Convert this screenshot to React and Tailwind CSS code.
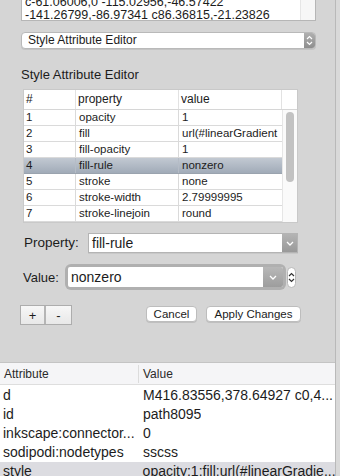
import React from 'react';

const rows = [
  ['1', 'opacity', '1'],
  ['2', 'fill', 'url(#linearGradient'],
  ['3', 'fill-opacity', '1'],
  ['4', 'fill-rule', 'nonzero'],
  ['5', 'stroke', 'none'],
  ['6', 'stroke-width', '2.79999995'],
  ['7', 'stroke-linejoin', 'round'],
];

const attrs = [
  ['d', 'M416.83556,378.64927 c0,4...'],
  ['id', 'path8095'],
  ['inkscape:connector...', '0'],
  ['sodipodi:nodetypes', 'sscss'],
  ['style', 'opacity:1;fill:url(#linearGradie...'],
];

const ChevronDown = ({ className = '' }) => (
  <svg width="8" height="5" viewBox="0 0 8 5" className={className}>
    <polyline points="1,1 4,4 7,1" fill="none" stroke="currentColor" strokeWidth="1.3" />
  </svg>
);

const UpDown = ({ className = '' }) => (
  <svg width="7" height="11" viewBox="0 0 7 11" className={className}>
    <polyline points="1,4 3.5,1.5 6,4" fill="none" stroke="currentColor" strokeWidth="1.2" />
    <polyline points="1,7 3.5,9.5 6,7" fill="none" stroke="currentColor" strokeWidth="1.2" />
  </svg>
);

export default function App() {
  return (
    <div className="w-[340px] h-[476px] overflow-hidden flex bg-[#d5d5d5] font-['Liberation_Sans',Arial,sans-serif] text-[#1c1c1c]">
      <div className="w-[335px] h-[476px]">
        {/* path text area */}
        <div className="ml-[21px] w-[295px] h-[21px] flex bg-white border-x border-b border-[#b6b6b6] overflow-hidden">
          <div className="flex-1 pl-[3px] text-[12.5px] leading-[13px] -mt-[4px] whitespace-nowrap overflow-hidden">
            <div>c-61.06006,0 -115.02956,-46.57422</div>
            <div>-141.26799,-86.97341 c86.36815,-21.23826</div>
          </div>
          <div className="w-[15px] bg-[#f7f7f7] border-l border-[#e6e6e6]" />
        </div>

        {/* panel selector */}
        <div className="mt-[11px] ml-[21px] w-[295px] h-[17px] flex rounded-[4px] border border-[#b9b9b9] bg-white overflow-hidden shadow-[0_1px_0_rgba(0,0,0,0.08)]">
          <div className="flex-1 pl-[6px] text-[12px] leading-[15px]">Style Attribute Editor</div>
          <div className="w-[11px] flex items-center justify-center bg-gradient-to-b from-[#b0b0b0] to-[#8e8e8e] text-white">
            <UpDown />
          </div>
        </div>

        <div className="mt-[18px] ml-[21px] text-[13px] leading-[16px]">Style Attribute Editor</div>

        {/* style table */}
        <div className="mt-[6px] ml-[23px] w-[275px] border border-[#c9c9c9] bg-white">
          <div className="grid grid-cols-[52px_103px_103px_15px] h-[20px] border-b border-[#d6d6d6] text-[12px] leading-[19px]">
            <div className="pl-[2px] border-r border-[#e2e2e2]">#</div>
            <div className="pl-[2px] border-r border-[#e2e2e2]">property</div>
            <div className="pl-[2px] border-r border-[#e2e2e2]">value</div>
            <div />
          </div>
          <div className="flex">
            <div className="w-[258px]">
              {rows.map(([n, p, v]) => {
                const sel = n === '4';
                return (
                  <div
                    key={n}
                    className={`grid grid-cols-[52px_103px_103px] h-[16px] border-b text-[11.5px] leading-[15px] ${
                      sel
                        ? 'bg-gradient-to-b from-[#c2c9d2] to-[#a1abb8] border-[#9aa3ae]'
                        : 'border-[#dadada]'
                    }`}
                  >
                    <div className={`pl-[2px] border-r ${sel ? 'border-[#b5bcc6]' : 'border-[#dadada]'}`}>{n}</div>
                    <div className={`pl-[3px] border-r ${sel ? 'border-[#b5bcc6]' : 'border-[#dadada]'}`}>{p}</div>
                    <div className="pl-[3px] whitespace-nowrap overflow-hidden">{v}</div>
                  </div>
                );
              })}
            </div>
            <div className="flex-1 border-l border-[#e6e6e6] bg-[#fafafa] pt-[2px] flex justify-center">
              <div className="w-[8px] h-[70px] rounded-full bg-[#c2c2c2]" />
            </div>
          </div>
        </div>

        {/* property row */}
        <div className="mt-[10px] flex items-center">
          <div className="ml-[24px] w-[64px] text-[13.5px]">Property:</div>
          <div className="w-[210px] h-[20px] flex border border-[#b4b4b4] bg-white shadow-[0_1px_0_rgba(0,0,0,0.06)]">
            <div className="flex-1 pl-[3px] text-[14px] leading-[18px]">fill-rule</div>
            <div className="w-[15px] flex items-center justify-center bg-gradient-to-b from-[#b4b4b4] to-[#999999] text-white">
              <ChevronDown />
            </div>
          </div>
        </div>

        {/* value row */}
        <div className="mt-[11px] flex items-center">
          <div className="ml-[23px] w-[42px] text-[13px]">Value:</div>
          <div className="w-[221px] h-[26px] p-[3px] rounded-[6px] bg-[#b0b0b0]">
            <div className="h-[20px] flex bg-white rounded-[2px] overflow-hidden">
              <div className="flex-1 pl-[3px] text-[14px] leading-[20px]">nonzero</div>
              <div className="w-[20px] flex items-center justify-center bg-gradient-to-b from-[#b8b8b8] to-[#9d9d9d] text-white">
                <ChevronDown />
              </div>
            </div>
          </div>
          <div className="ml-[1px] w-[9px] h-[21px] rounded-full border border-[#b8b8b8] bg-white flex items-center justify-center text-[#333]">
            <UpDown />
          </div>
        </div>

        {/* buttons */}
        <div className="mt-[15px] flex items-start">
          <div className="ml-[20px] flex h-[20px] border border-[#adadad] bg-gradient-to-b from-[#f7f7f7] to-[#e8e8e8]">
            <div className="w-[25px] border-r-2 border-[#b5b5b5] flex items-center justify-center text-[13px] leading-none">+</div>
            <div className="w-[25px] flex items-center justify-center text-[13px] leading-none">-</div>
          </div>
          <div className="ml-[74px] mt-[1px] w-[51px] h-[16px] rounded-[4px] border border-[#bdbdbd] bg-white shadow-[0_1px_0_rgba(0,0,0,0.1)] text-[11.5px] leading-[14px] text-center">
            Cancel
          </div>
          <div className="ml-[9px] mt-[1px] w-[95px] h-[16px] rounded-[4px] border border-[#bdbdbd] bg-white shadow-[0_1px_0_rgba(0,0,0,0.1)] text-[11.5px] leading-[14px] text-center">
            Apply Changes
          </div>
        </div>

        {/* attribute list */}
        <div className="mt-[37px] h-[120px] border-t border-[#c4c4c4] bg-white">
          <div className="h-[22px] flex items-center bg-[#f5f5f7] border-b border-[#dedede] text-[12px] text-[#2a2a2a]">
            <div className="w-[139px] pl-[4px] border-r border-[#dcdcdc] h-[18px] leading-[18px]">Attribute</div>
            <div className="pl-[4px]">Value</div>
          </div>
          <div className="pt-[1px]">
            {attrs.map(([a, v]) => (
              <div
                key={a}
                className={`h-[19px] flex text-[14px] leading-[19px] ${a === 'style' ? 'bg-[#dcdce1]' : ''}`}
              >
                <div className="w-[139px] pl-[3px] whitespace-nowrap overflow-hidden">{a}</div>
                <div className="pl-[4px] whitespace-nowrap overflow-hidden">{v}</div>
              </div>
            ))}
          </div>
        </div>
      </div>
      <div className="w-[1px] bg-[#b9b9b9]" />
      <div className="flex-1 bg-[#d9d9d9]" />
    </div>
  );
}
